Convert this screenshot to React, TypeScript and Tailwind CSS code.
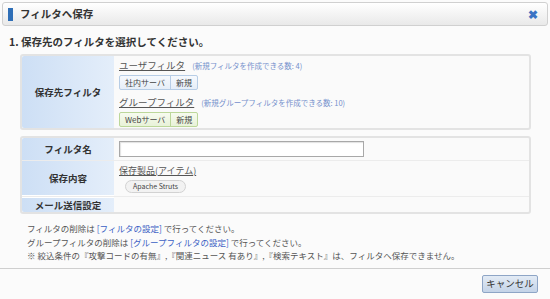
import React from "react";

const font = { fontFamily: '"Noto Sans CJK JP", "Noto Sans", sans-serif' };

function Label({ children, className = "" }: { children: React.ReactNode; className?: string }) {
  return (
    <div
      className={`w-[92px] shrink-0 flex items-center justify-center bg-gradient-to-r from-[#cddff5] to-[#e4eefa] text-[9.5px] font-bold text-[#333] ${className}`}
    >
      {children}
    </div>
  );
}

function SplitButton({ name, tone }: { name: string; tone: "blue" | "green" }) {
  const box =
    tone === "blue"
      ? "border-[#b7cde6] bg-gradient-to-b from-[#f6f9fd] to-[#e6eef8]"
      : "border-[#bcd79a] bg-gradient-to-b from-[#f7fbef] to-[#e8f2d8]";
  const sep = tone === "blue" ? "border-[#b7cde6]" : "border-[#bcd79a]";
  return (
    <div className={`flex h-[15px] w-fit rounded-[2px] border ${box} text-[8px] text-[#444] leading-none`}>
      <span className="flex items-center px-[5px]">{name}</span>
      <span className={`flex items-center border-l ${sep} px-[5px]`}>新規</span>
    </div>
  );
}

export default function App() {
  return (
    <div className="w-[550px] h-[299px] bg-[#fbfbfb] overflow-hidden" style={font}>
      {/* title bar */}
      <div className="mx-[2px] mt-[2px] h-[24px] flex items-center rounded-[3px] border border-[#d0d0d0] bg-gradient-to-b from-[#ffffff] to-[#e9e9e9]">
        <div className="ml-[5px] h-[13px] w-[5px] bg-[#2f6fb7]" />
        <span className="ml-[7px] text-[10.5px] font-bold text-[#333]">フィルタへ保存</span>
        <span className="ml-auto mr-[9px] text-[12px] font-bold leading-none text-[#3a74c4]">✖</span>
      </div>

      <div className="pl-[9px] pt-[9px] text-[10.5px] leading-[14px] font-bold text-[#333]">1. 保存先のフィルタを選択してください。</div>

      {/* section 1 */}
      <div className="ml-[20px] mt-[5px] w-[511px] h-[76px] flex rounded-[3px] border-[2px] border-[#e3e3e3] bg-[#fafafa]">
        <Label className="rounded-l-[2px]">保存先フィルタ</Label>
        <div className="flex flex-col pl-[5px] pt-[3px]">
          <div className="flex items-baseline gap-[7px] leading-[13px]">
            <span className="text-[9.5px] text-[#555] underline">ユーザフィルタ</span>
            <span className="text-[7.5px] text-[#7590cc]">(新規フィルタを作成できる数: 4)</span>
          </div>
          <div className="mt-[3px]">
            <SplitButton name="社内サーバ" tone="blue" />
          </div>
          <div className="mt-[6px] flex items-baseline gap-[7px] leading-[13px]">
            <span className="text-[9.5px] text-[#555] underline">グループフィルタ</span>
            <span className="text-[7.5px] text-[#7590cc]">(新規グループフィルタを作成できる数: 10)</span>
          </div>
          <div className="mt-[3px]">
            <SplitButton name="Webサーバ" tone="green" />
          </div>
        </div>
      </div>

      {/* section 2 */}
      <div className="ml-[20px] mt-[6px] w-[511px] h-[78px] flex flex-col rounded-[3px] border-[2px] border-[#e3e3e3] bg-[#fafafa]">
        <div className="flex h-[24px] border-b border-[#ececec]">
          <Label className="rounded-tl-[2px]">フィルタ名</Label>
          <div className="flex items-center pl-[5px]">
            <div className="h-[16px] w-[245px] border border-[#a8a8a8] bg-white shadow-[inset_1px_1px_1px_rgba(0,0,0,0.12)]" />
          </div>
        </div>
        <div className="flex h-[37px] border-b border-[#ececec]">
          <Label className="border-b border-white">保存内容</Label>
          <div className="flex flex-col pl-[5px] pt-[4px]">
            <span className="text-[9px] leading-[12px] text-[#555] underline">保存製品(アイテム)</span>
            <span className="mt-[3px] ml-[6px] w-fit rounded-full border border-[#d2d2d2] bg-[#f2f2f2] px-[7px] py-[2px] text-[7px] leading-none text-[#444]">
              Apache Struts
            </span>
          </div>
        </div>
        <div className="flex flex-1">
          <Label className="rounded-bl-[2px] border-t border-white">メール送信設定</Label>
        </div>
      </div>

      {/* notes */}
      <div className="pl-[27px] pt-[8px] text-[8.5px] leading-[13.5px] text-[#555]">
        <div>
          フィルタの削除は <span className="text-[#3a5fc4]">[フィルタの設定]</span> で行ってください。
        </div>
        <div>
          グループフィルタの削除は <span className="text-[#3a5fc4]">[グループフィルタの設定]</span> で行ってください。
        </div>
        <div>※ 絞込条件の『攻撃コードの有無』,『関連ニュース 有あり』,『検索テキスト』は、フィルタへ保存できません。</div>
      </div>

      <div className="mt-[5px] border-t border-[#cfcfcf]" />
      <div className="flex justify-end pr-[12px] pt-[6px]">
        <div className="flex h-[18px] w-[56px] items-center justify-center rounded-[2px] border border-[#8ea5c6] bg-gradient-to-b from-[#e3ebf5] to-[#c4d3e8] text-[9.5px] leading-none text-[#333]">
          キャンセル
        </div>
      </div>
    </div>
  );
}
